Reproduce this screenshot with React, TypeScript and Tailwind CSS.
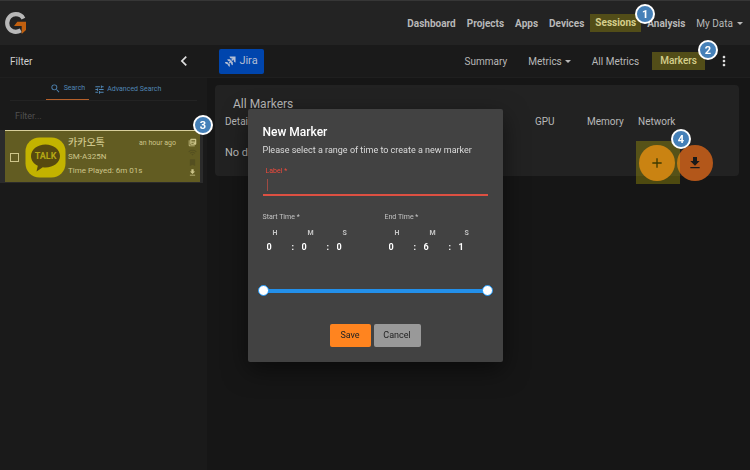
import React, { useState } from 'react';
import {
  MdAdd,
  MdBookmark,
  MdChevronLeft,
  MdFileDownload,
  MdLibraryBooks,
  MdMoreVert,
  MdSearch,
  MdTune,
  MdWifi,
} from 'react-icons/md';

const Caret: React.FC = () => (
  <svg className="w-[6px] h-[3px]" viewBox="0 0 12 6" fill="currentColor" aria-hidden="true">
    <path d="M0 0h12L6 6z" />
  </svg>
);

interface StepBadgeProps {
  step: number;
  className: string;
}

const StepBadge: React.FC<StepBadgeProps> = ({ step, className }) => (
  <span
    className={`absolute z-30 flex size-5 items-center justify-center rounded-full border-2 border-white bg-[#4580b8] text-[11px] font-bold leading-none text-white ${className}`}
  >
    {step}
  </span>
);

const Logo: React.FC = () => (
  <svg className="w-[22px] h-[22px]" viewBox="0 0 22 22" aria-label="Home">
    <path
      d="M18.4 6.6C17 3.900 14 2.200 10.800 2.200 5.900 2.200 2.200 6 2.200 11s3.700 8.800 8.600 8.800c1.700 0 3.200-.4 5-1.400"
      fill="none"
      stroke="#b8b8b8"
      strokeWidth="4.2"
    />
    <path d="M9 14l3.300-4.300H21V18l-4.300 4v-8z" fill="#c2600f" />
  </svg>
);

const JiraMark: React.FC = () => (
  <svg className="size-[11px]" viewBox="0 0 24 24" fill="currentColor" aria-hidden="true">
    <path d="M10 1h13v13c-2.600-.6-4-2.300-4-5V7.500L15.500 11l-2.200-2.200L16.500 5.500H15c-2.800 0-4.500-1.600-5-4.500z" />
    <path d="M5 7h6.500c.2 1.800 1 3 2.500 3.700l3 3c.3 1.300 0 4.300 0 6.300-2.500-.8-3.800-2.500-3.800-5v-1.200l-3 3-2.200-2.200 3-3H10C7.300 11.600 5.500 10 5 7z" />
    <path d="M0 13h5.500c.3 1.600 1 2.700 2.300 3.300L10.500 18v5.500c-2.400-.6-3.700-2-3.900-4.500L4 17.500c-2.400-.3-3.700-1.800-4-4.500z" />
  </svg>
);

const TalkIcon: React.FC = () => (
  <svg className="size-[41px] shrink-0" viewBox="0 0 41 41" aria-hidden="true">
    <rect x="0.5" y="0.5" width="40" height="40" rx="14" fill="#c3b300" />
    <path
      d="M20.500 7.500C12.500 7.500 6 12.600 6 19c0 4.200 2.700 7.800 6.800 9.800L11.500 34.500l6.300-4.200c.9.1 1.800.2 2.700.2 8 0 14.500-5.100 14.500-11.500S28.500 7.500 20.500 7.500z"
      fill="#57490f"
    />
    <text x="20.500" y="22" textAnchor="middle" fontSize="9" fontWeight="700" fill="#b5a714">
      TALK
    </text>
  </svg>
);

const Header: React.FC = () => (
  <header className="flex h-[45px] items-center justify-between border-t border-[#363636] bg-[#232323] pl-[5px] pr-[7px]">
    <a href="#home">
      <Logo />
    </a>
    <nav className="flex items-center gap-[11px] text-[10px] font-bold text-[#b8b8b8]">
      <a href="#dashboard">Dashboard</a>
      <a href="#projects">Projects</a>
      <a href="#apps">Apps</a>
      <a href="#devices">Devices</a>
      <a href="#sessions" className="relative -mx-[5px] bg-[#524d18] px-[5px] leading-[18px] text-[#d6cf8c]">
        Sessions
        <StepBadge step={1} className="-right-[14px] -top-[10px]" />
      </a>
      <a href="#analysis">Analysis</a>
      <button className="flex items-center gap-1 font-normal">
        My Data <Caret />
      </button>
    </nav>
  </header>
);

const SessionCard: React.FC = () => (
  <article className="bg-[#2b2b2b] pb-px pl-[5px] pr-[3px] mr-1">
    <div className="relative flex items-center border-t border-[#d8cf9a] bg-[#625c22] pb-1 pt-[5px] pl-[5px] text-[#cdc58a]">
      <input
        type="checkbox"
        aria-label="Select session"
        className="mr-[6px] size-[9px] shrink-0 appearance-none border border-[#cdc58a]"
      />
      <TalkIcon />
      <div className="ml-[2px] flex-1 text-[8px] leading-[14px]">
        <div className="flex items-center justify-between">
          <h3 className="text-[10px] font-medium">카카오톡</h3>
          <span className="text-[7px]">an hour ago</span>
        </div>
        <p>SM-A325N</p>
        <p>Time Played: 6m 01s</p>
      </div>
      <div className="mx-1 flex w-4 flex-col items-center gap-px pl-2">
        <MdLibraryBooks className="size-[9px]" />
        <MdWifi className="size-[9px] text-[#544f20]" />
        <MdBookmark className="size-[9px] text-[#544f20]" />
        <MdFileDownload className="size-[9px]" />
      </div>
      <StepBadge step={3} className="-right-[13px] -top-4" />
    </div>
  </article>
);

const Sidebar: React.FC = () => (
  <aside className="w-[207px] shrink-0 bg-[#1a1a1a]">
    <div className="flex h-[33px] items-center justify-between border-b border-[#1f1f1f] pl-[10px] pr-[13px]">
      <h2 className="text-[10px] text-[#d0d0d0]">Filter</h2>
      <button aria-label="Collapse filter">
        <MdChevronLeft className="size-5 text-[#e0e0e0]" />
      </button>
    </div>
    <div className="mx-[10px] flex justify-center gap-[5px] border-b border-[#232323] text-[7px] text-[#5086b5]">
      <button className="flex h-[22px] items-center gap-[3px] border-b border-[#b5602a] px-1">
        <MdSearch className="size-[11px]" /> Search
      </button>
      <button className="flex h-[22px] items-center gap-[2px]">
        <MdTune className="size-[11px]" /> Advanced Search
      </button>
    </div>
    <input
      type="text"
      aria-label="Filter sessions"
      placeholder="Filter..."
      className="block h-[29px] w-full pl-[15px] text-[9px] outline-none placeholder:text-[#505050]"
    />
    <SessionCard />
  </aside>
);

const SessionNav: React.FC = () => (
  <div className="flex h-[33px] items-center justify-between border-b border-[#1f1f1f] bg-[#1a1a1a] pl-3 pr-[18px]">
    <button className="flex h-[25px] w-[45px] items-center justify-center gap-[3px] rounded-xs bg-[#0045ad] text-[11px] text-[#b4bfd4]">
      <JiraMark /> Jira
    </button>
    <nav className="flex items-center gap-[21px] text-[10px] text-[#b8b8b8]">
      <a href="#summary">Summary</a>
      <button className="flex items-center gap-[3px]">
        Metrics <Caret />
      </button>
      <a href="#all-metrics">All Metrics</a>
      <a href="#markers" className="relative -mx-2 bg-[#524d18] px-2 leading-[18px] font-medium text-[#d6cf8c]">
        Markers
        <StepBadge step={2} className="-right-[13px] -top-3" />
      </a>
      <button aria-label="More options" className="-ml-[2px]">
        <MdMoreVert className="size-4 text-[#e0e0e0]" />
      </button>
    </nav>
  </div>
);

const MarkersPanel: React.FC = () => (
  <section className="relative mx-2 mt-[7px] mr-[11px] rounded-sm bg-[#222222] px-[10px] pb-[14px] pt-3 text-[10px] text-[#b8b8b8]">
    <h1 className="pl-2 text-xs leading-[14px]">All Markers</h1>
    <table className="w-full text-left">
      <thead>
        <tr className="h-[21px]">
          <th className="font-normal">Details</th>
          <th className="w-[52px] font-normal">GPU</th>
          <th className="w-[51px] font-normal">Memory</th>
          <th className="w-[91px] font-normal">Network</th>
        </tr>
      </thead>
      <tbody>
        <tr className="h-[30px]">
          <td colSpan={4} className="pt-3 text-[11px]">No data</td>
        </tr>
      </tbody>
    </table>
    <div className="absolute -bottom-[5px] right-[26px] flex gap-[2px]">
      <button aria-label="Add marker" className="flex size-9 items-center justify-center rounded-full bg-[#c0641a] text-black">
        <MdAdd className="size-4" />
      </button>
      <button aria-label="Download markers" className="flex size-9 items-center justify-center rounded-full bg-[#b3571a] text-[#1a1a1a]">
        <MdFileDownload className="size-4" />
      </button>
      <div className="pointer-events-none absolute -left-[3px] -top-1 h-[43px] w-11 bg-[#e5d800]/27">
        <StepBadge step={4} className="-right-[11px] -top-3" />
      </div>
    </div>
  </section>
);

interface TimeFieldsProps {
  title: string;
  values: number[];
}

const TimeFields: React.FC<TimeFieldsProps> = ({ title, values }) => (
  <fieldset>
    <legend className="text-[7px] leading-[10px] text-[#c4c4c4]">{title} *</legend>
    <div className="mt-[6px] flex">
      {['H', 'M', 'S'].map((unit, i) => (
        <label key={unit} className="block w-[35px]">
          <span className="block pl-[10px] text-[7px] font-bold leading-[10px] text-[#c4c4c4]">{unit}</span>
          <span className="mt-[3px] flex text-[9px] font-bold leading-3 text-white">
            <input
              type="text"
              inputMode="numeric"
              defaultValue={values[i]}
              className="block h-3 w-[29px] pl-1 outline-none"
            />
            {i < 2 && <span>:</span>}
          </span>
        </label>
      ))}
    </div>
  </fieldset>
);

const thumbClasses =
  'pointer-events-none col-start-1 row-start-1 h-3 w-full appearance-none bg-transparent [&::-webkit-slider-thumb]:pointer-events-auto [&::-webkit-slider-thumb]:size-[11px] [&::-webkit-slider-thumb]:appearance-none [&::-webkit-slider-thumb]:rounded-full [&::-webkit-slider-thumb]:border [&::-webkit-slider-thumb]:border-[#2196f3] [&::-webkit-slider-thumb]:bg-white';

const RangeSlider: React.FC = () => {
  const [start, setStart] = useState(0);
  const [end, setEnd] = useState(361);

  return (
    <div className="-mx-[5px] mt-8 grid items-center">
      <div className="col-start-1 row-start-1 mx-[5px] h-1 bg-[#2390ea]" />
      <input
        type="range"
        aria-label="Start of range"
        min={0}
        max={361}
        value={start}
        onChange={e => setStart(Math.min(Number(e.target.value), end))}
        className={thumbClasses}
      />
      <input
        type="range"
        aria-label="End of range"
        min={0}
        max={361}
        value={end}
        onChange={e => setEnd(Math.max(Number(e.target.value), start))}
        className={thumbClasses}
      />
    </div>
  );
};

const NewMarkerDialog: React.FC = () => (
  <div className="fixed inset-0 z-20 flex items-center justify-center">
    <div
      role="dialog"
      aria-modal="true"
      aria-labelledby="new-marker-title"
      className="w-[255px] rounded-xs bg-[#424242] p-[15px] shadow-[0_8px_24px_rgba(0,0,0,0.5)]"
    >
      <h2 id="new-marker-title" className="text-xs font-medium leading-4 text-white">New Marker</h2>
      <p className="mt-1 whitespace-nowrap text-[9px] leading-3 text-[#dcdcdc]">
        Please select a range of time to create a new marker
      </p>

      {/* Label field, shown in its error state */}
      <div className="mt-[10px] border-b-2 border-[#dd5042]">
        <label htmlFor="marker-label" className="block pl-[3px] text-[7px] leading-[10px] text-[#f04a3c]">
          Label *
        </label>
        <div className="mb-[3px] mt-[3px] flex pl-1">
          <span className="h-3 w-px bg-[#a04a42]" aria-hidden="true" />
          <input id="marker-label" type="text" required className="h-3 flex-1 text-[9px] text-white outline-none" />
        </div>
      </div>

      <div className="mt-4 flex gap-[17px]">
        <TimeFields title="Start Time" values={[0, 0, 0]} />
        <TimeFields title="End Time" values={[0, 6, 1]} />
      </div>

      <RangeSlider />

      <div className="mt-[27px] flex justify-center gap-[3px] text-[9px] text-[#222222]">
        <button className="h-[23px] w-[41px] rounded-xs bg-[#ff841f] pt-px">Save</button>
        <button className="h-[23px] w-[47px] rounded-xs bg-[#999999] pt-px">Cancel</button>
      </div>
    </div>
  </div>
);

const App: React.FC = () => (
  <div className="flex min-h-screen flex-col bg-[#161616] font-[Roboto,'Noto_Sans_CJK_KR',sans-serif]">
    <Header />
    <div className="flex flex-1">
      <Sidebar />
      <main className="min-w-0 flex-1">
        <SessionNav />
        <MarkersPanel />
      </main>
    </div>
    <NewMarkerDialog />
  </div>
);

export default App;
